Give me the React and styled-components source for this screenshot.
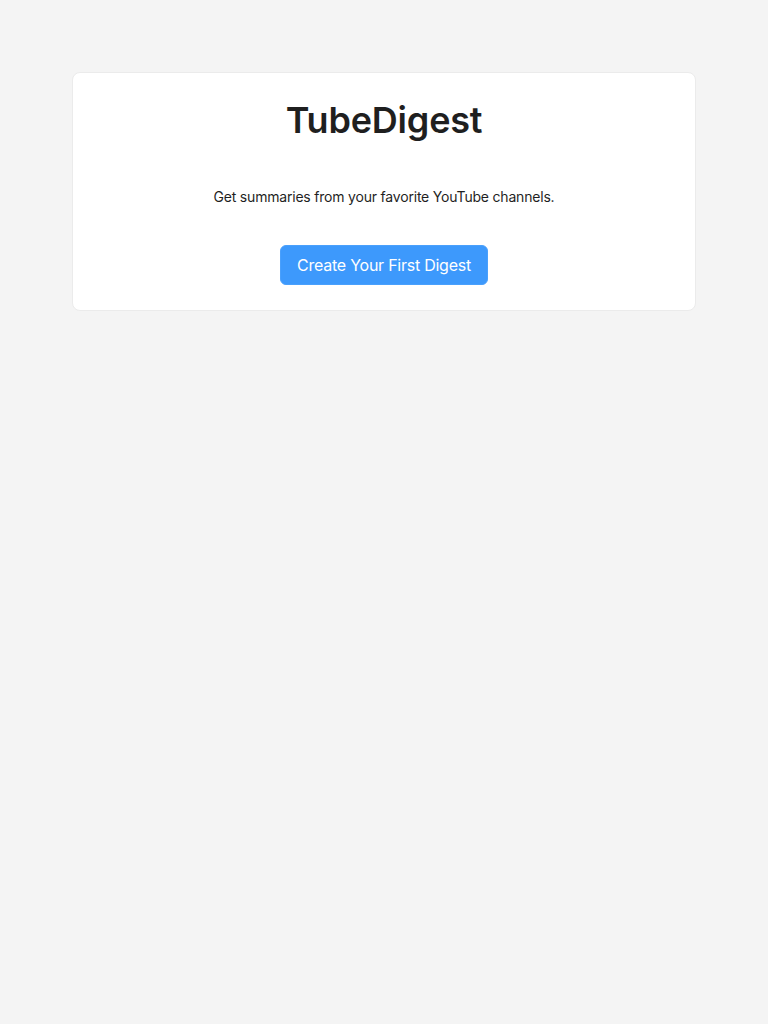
import React from "react";
import styled, { createGlobalStyle } from "styled-components";

const GlobalStyle = createGlobalStyle`
  html, body { margin: 0; padding: 0; background: #f4f4f4; }
  body { font-family: Inter, "Noto Sans", sans-serif; color: #1f1f1f; }
  * { box-sizing: border-box; }
`;

const Page = styled.main`
  min-height: 1024px;
  padding: 72px;
`;

const Card = styled.section`
  background: #ffffff;
  border: 1px solid #ebebeb;
  border-radius: 8px;
  padding: 23px 24px 25px;
  display: flex;
  flex-direction: column;
  align-items: center;
  text-align: center;
`;

const Title = styled.h1`
  margin: 0;
  font-size: 36px;
  line-height: 48px;
  font-weight: 600;
  color: #1f1f1f;
  letter-spacing: -0.2px;
`;

const Subtitle = styled.p`
  margin: 43px 0 0;
  font-size: 14px;
  line-height: 20px;
  letter-spacing: -0.2px;
  color: #1f1f1f;
`;

const PrimaryButton = styled.button`
  margin-top: 38px;
  height: 40px;
  padding: 0 16px;
  border: 1px solid #4aa0fc;
  border-radius: 6px;
  background: #3d99fc;
  color: #ffffff;
  font-family: inherit;
  font-size: 16px;
  font-weight: 400;
  letter-spacing: -0.25px;
  cursor: pointer;
`;

export default function App() {
  return (
    <>
      <GlobalStyle />
      <Page>
        <Card>
          <Title>TubeDigest</Title>
          <Subtitle>Get summaries from your favorite YouTube channels.</Subtitle>
          <PrimaryButton>Create Your First Digest</PrimaryButton>
        </Card>
      </Page>
    </>
  );
}
